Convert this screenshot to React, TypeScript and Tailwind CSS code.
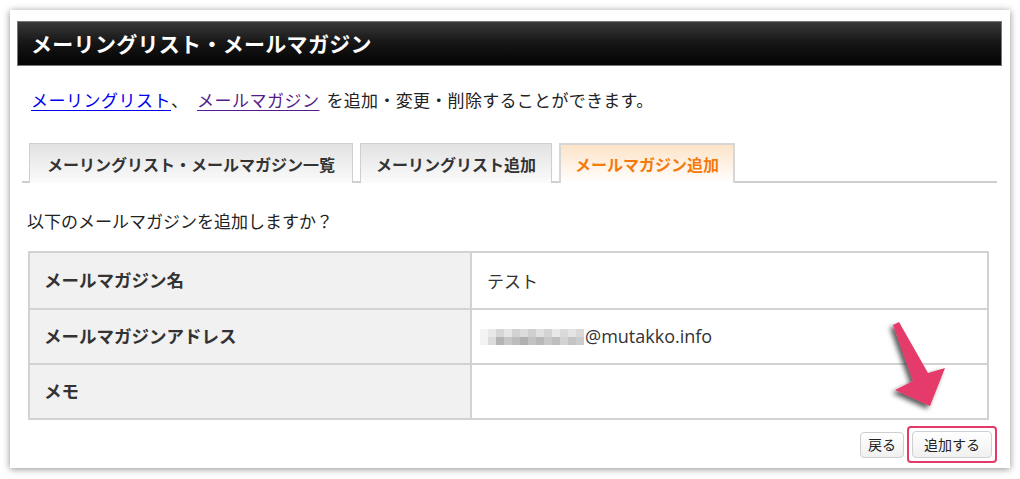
import React from 'react';

const font = { fontFamily: '"Noto Sans CJK JP", "Noto Sans", sans-serif' };

const mosaic = [
  ['#f4f4f4', '#e8e8e8', '#d6d6d6', '#e6e6e6', '#d2d2d2', '#dcdcdc', '#d0d0d0', '#e0e0e0', '#d4d4d4', '#e8e8e8', '#dadada', '#e4e4e4', '#d8d8d8'],
  ['#f2f2f2', '#dcdcdc', '#b4b4b4', '#c6c6c6', '#bcbcbc', '#b0b0b0', '#c2c2c2', '#b8b8b8', '#c8c8c8', '#bebebe', '#d2d2d2', '#c4c4c4', '#cccccc'],
];

const rows = [
  { label: 'メールマガジン名', value: 'テスト' },
  { label: 'メールマガジンアドレス', value: 'email' },
  { label: 'メモ', value: '' },
];

const Blurred = () => (
  <svg width="104" height="16" className="-ml-[7px] mr-[1px]">
    {mosaic.map((row, r) =>
      row.map((c, i) => <rect key={`${r}-${i}`} x={i * 8} y={r * 8} width="8" height="8" fill={c} />)
    )}
  </svg>
);

const Arrow = () => (
  <svg width="80" height="110" viewBox="0 0 80 110" className="absolute left-[880px] top-[313px]">
    <defs>
      <filter id="sh" x="-50%" y="-50%" width="200%" height="200%">
        <feDropShadow dx="-3" dy="3" stdDeviation="2.5" floodColor="#000" floodOpacity="0.65" />
      </filter>
    </defs>
    <polygon
      points="13,12 19,9 48,60 65,55 50,93 15,77 33,68"
      fill="#e43a6a"
      filter="url(#sh)"
    />
  </svg>
);

export default function App() {
  return (
    <div className="relative w-[1020px] h-[479px] bg-white pt-[10px] pl-[10px] overflow-hidden" style={font}>
      <div className="w-[1000px] h-[458px] bg-white shadow-[0_1px_7px_rgba(0,0,0,0.45)] pt-[11px]">
        <div className="ml-[7px] w-[985px] h-[45px] border border-[#777] bg-gradient-to-b from-[#3a3a3a] via-[#151515] to-[#050505] flex items-center pl-[13px]">
          <span className="text-white font-bold text-[21px] tracking-[0.3px]">メーリングリスト・メールマガジン</span>
        </div>

        <div className="ml-[21px] mt-[23px] h-[22px] flex items-center text-[17px] text-[#222]">
          <a className="text-[#0000ee] underline underline-offset-[3px] tracking-[0.5px]">メーリングリスト</a>
          <span>、</span>
          <a className="ml-[9px] text-[#551a8b] underline underline-offset-[3px] tracking-[0.5px]">メールマガジン</a>
          <span className="ml-[7px] tracking-[0.3px]">を追加・変更・削除することができます。</span>
        </div>

        <div className="ml-[12px] mt-[32px] w-[975px] h-[40px] border-b-2 border-[#cfcfcf] flex items-end gap-[7px] pl-[7px]">
          <div className="h-[40px] -mb-[2px] px-[17px] flex items-center border border-b-0 border-[#cfcfcf] bg-gradient-to-b from-[#e2e2e2] to-[#fbfbfb] text-[16px] font-bold text-[#333]">
            メーリングリスト・メールマガジン一覧
          </div>
          <div className="h-[40px] -mb-[2px] px-[15px] flex items-center border border-b-0 border-[#cfcfcf] bg-gradient-to-b from-[#e2e2e2] to-[#fbfbfb] text-[16px] font-bold text-[#333]">
            メーリングリスト追加
          </div>
          <div className="h-[40px] -mb-[2px] px-[14px] flex items-center border-2 border-b-0 border-[#d6d6d6] bg-gradient-to-b from-[#fde3c8] to-white text-[16px] font-bold text-[#f57a0c]">
            メールマガジン追加
          </div>
        </div>

        <div className="ml-[17px] mt-[26px] text-[17px] leading-[24px] text-[#222]">以下のメールマガジンを追加しますか？</div>

        <div className="ml-[18px] mt-[18px] w-[961px] border-2 border-[#d2d2d2]">
          {rows.map((row, i) => (
            <div key={row.label} className={`flex h-[55px] ${i > 0 ? 'border-t-2 border-[#d2d2d2]' : ''}`}>
              <div className="w-[442px] bg-[#f1f1f1] border-r-2 border-[#d2d2d2] flex items-center pl-[14px] text-[17.5px] font-bold text-[#333]">
                {row.label}
              </div>
              <div className="flex-1 flex items-center pl-[15px] text-[17px] text-[#333]">
                {row.value === 'email' ? (
                  <>
                    <Blurred />
                    <span className="text-[18px]" style={{ fontFamily: '"Open Sans", "Noto Sans", sans-serif' }}>
                      @mutakko.info
                    </span>
                  </>
                ) : (
                  row.value
                )}
              </div>
            </div>
          ))}
        </div>

        <div className="mt-[6px] w-[987px] flex justify-end items-center gap-[3px]">
          <button className="h-[26px] px-[7px] rounded-[4px] border border-[#cfcfcf] bg-gradient-to-b from-white to-[#f0f0f0] text-[14px] text-[#222]">
            戻る
          </button>
          <div className="p-[3px] border-2 border-[#e43a6a] rounded-[4px]">
            <button className="h-[27px] w-[80px] rounded-[4px] border border-[#cfcfcf] bg-gradient-to-b from-white to-[#f0f0f0] text-[14px] text-[#222]">
              追加する
            </button>
          </div>
        </div>
      </div>
      <Arrow />
    </div>
  );
}
